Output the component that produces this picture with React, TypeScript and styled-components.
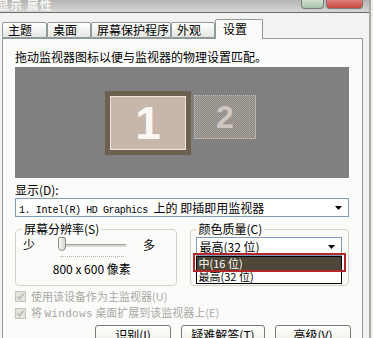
import React from "react";
import styled, { createGlobalStyle } from "styled-components";

const GlobalStyle = createGlobalStyle`
  html, body {
    margin: 0;
    padding: 0;
    background: #efefed;
  }
  body {
    font-family: "Noto Sans CJK SC", "Liberation Sans", sans-serif;
    font-size: 12px;
    color: #000;
  }
`;

const Window = styled.div`
  width: 369px;
  height: 338px;
  overflow: hidden;
  background: #f2f2f0;
  border-right: 2px solid #a9a9a6;
  display: flex;
  flex-direction: column;
`;

const TitleBar = styled.div`
  height: 12px;
  flex: none;
  background: linear-gradient(#b4b4b2, #d6d6d4);
  border-bottom: 1px solid #6e6e6c;
  display: flex;
  align-items: flex-start;
  justify-content: space-between;
  overflow: hidden;
`;

const TitleText = styled.span`
  color: #f4f4f4;
  font-weight: bold;
  font-size: 12px;
  line-height: 10px;
  margin-left: -3px;
  letter-spacing: 1px;
`;

const Controls = styled.div`
  display: flex;
  margin-right: 6px;
  gap: 2px;
`;

interface CtlProps {
  $w: number;
  $bg: string;
}

const Ctl = styled.div<CtlProps>`
  width: ${({ $w }) => $w}px;
  height: 8px;
  background: ${({ $bg }) => $bg};
  border: 1px solid #7a7a78;
  border-top: none;
  border-radius: 0 0 4px 4px;
`;

const Body = styled.div`
  padding: 7px 0 0 2px;
  display: flex;
  flex-direction: column;
`;

const TabRow = styled.div`
  display: flex;
  align-items: flex-end;
  height: 18px;
  position: relative;
  z-index: 1;
`;

interface TabProps {
  $w: number;
  $active?: boolean;
}

const Tab = styled.div<TabProps>`
  width: ${({ $w }) => $w}px;
  box-sizing: border-box;
  height: ${({ $active }) => ($active ? 20 : 16)}px;
  margin-bottom: ${({ $active }) => ($active ? -1 : 0)}px;
  border: 1px solid #8f9a9b;
  border-bottom: ${({ $active }) => ($active ? "none" : "1px solid #8f9a9b")};
  border-radius: 2px 2px 0 0;
  background: ${({ $active }) =>
    $active ? "#fbfbfa" : "linear-gradient(#ffffff, #e6e6e2)"};
  padding-left: ${({ $active }) => ($active ? 7 : 5)}px;
  line-height: ${({ $active }) => ($active ? 18 : 14)}px;
  font-size: 12px;
  white-space: nowrap;
  overflow: hidden;
`;

const Panel = styled.div`
  width: 361px;
  box-sizing: border-box;
  height: 320px;
  border: 1px solid #8f9a9b;
  background: #fbfbfa;
  padding: 11px 13px 0 12px;
  display: flex;
  flex-direction: column;
`;

const Line = styled.div`
  line-height: 14px;
  height: 14px;
  white-space: nowrap;
`;

const MonitorArea = styled.div`
  margin-top: 3px;
  height: 111px;
  background: #808080;
  display: flex;
  justify-content: center;
  align-items: flex-start;
  padding-top: 24px;
  box-sizing: border-box;
  gap: 3px;
  padding-right: 3px;
`;

const MonitorOne = styled.div`
  width: 86px;
  height: 64px;
  box-sizing: border-box;
  border: 5px solid #6c6050;
  background: #c7b6ab;
  box-shadow: inset 0 0 0 1px #efe6dc;
  display: flex;
  align-items: center;
  justify-content: center;
  color: #fbf8f4;
  font-family: "Liberation Sans", Arial, sans-serif;
  font-weight: bold;
  font-size: 46px;
`;

const MonitorTwo = styled.div`
  margin-top: 4px;
  width: 62px;
  height: 44px;
  box-sizing: border-box;
  border: 1px dotted #c8c4c0;
  background: repeating-conic-gradient(#a9a29c 0% 25%, #8c8884 0% 50%) 0 0 / 2px 2px;
  display: flex;
  align-items: center;
  justify-content: center;
  color: #cfc8c2;
  font-family: "Liberation Sans", Arial, sans-serif;
  font-weight: bold;
  font-size: 32px;
`;

const Label = styled(Line)`
  margin-top: 5px;
`;

interface SelectProps {
  $w?: number;
}

const Select = styled.div<SelectProps>`
  margin-top: 1px;
  width: ${({ $w }) => ($w ? `${$w}px` : "auto")};
  height: 19px;
  box-sizing: border-box;
  border: 1px solid #7f9db9;
  background: #fff;
  display: flex;
  align-items: center;
  justify-content: space-between;
  padding: 0 6px 0 3px;
  white-space: nowrap;
`;

interface MonoProps {
  $size?: number;
  $spacing?: number;
}

const Mono = styled.span<MonoProps>`
  font-family: "Liberation Mono", monospace;
  font-size: ${({ $size }) => $size ?? 10}px;
  letter-spacing: ${({ $spacing }) => $spacing ?? -0.4}px;
`;

const Arrow = () => (
  <svg width="7" height="4" viewBox="0 0 7 4">
    <path d="M0 0H7L3.5 4Z" fill="#000" />
  </svg>
);

const Groups = styled.div`
  margin-top: 5px;
  display: flex;
  gap: 13px;
`;

interface GroupProps {
  $w: number;
}

const Group = styled.fieldset<GroupProps>`
  margin: 0;
  width: ${({ $w }) => $w}px;
  height: 64px;
  box-sizing: border-box;
  border: 1px solid #d6d3c6;
  border-radius: 4px;
  padding: 0 5px;
`;

const Legend = styled.legend`
  padding: 0 2px;
  margin-left: 1px;
  line-height: 14px;
  font-size: 12px;
`;

const SliderRow = styled.div`
  display: flex;
  align-items: flex-start;
  height: 18px;
  padding-left: 2px;
`;

const SliderTrack = styled.div`
  width: 68px;
  margin: 0 17px 0 23px;
  height: 18px;
  position: relative;
  &::before {
    content: "";
    position: absolute;
    left: 0;
    right: 0;
    top: 8px;
    height: 2px;
    background: #d8d8d0;
    border-top: 1px solid #a0a09a;
  }
  &::after {
    content: "";
    position: absolute;
    left: 2px;
    right: 2px;
    top: 20px;
    border-top: 1px dotted #b8b8b0;
  }
`;

const Thumb = styled.div`
  position: absolute;
  left: 0;
  top: 1px;
  width: 8px;
  height: 14px;
  box-sizing: border-box;
  border: 1px solid #8f8f88;
  border-radius: 2px 2px 4px 4px;
  background: linear-gradient(90deg, #f8f8f4, #d8d8d0);
`;

const Resolution = styled.div`
  margin-top: 8px;
  text-align: center;
  line-height: 14px;
  padding-right: 8px;
`;

const SelectWrap = styled.div`
  position: relative;
  width: 146px;
`;

const DropList = styled.div`
  position: absolute;
  left: 0;
  top: 19px;
  width: 146px;
  box-sizing: border-box;
  border: 1px solid #000;
  background: #fff;
  padding: 0;
  z-index: 2;
`;

interface ItemProps {
  $selected?: boolean;
}

const Item = styled.div<ItemProps>`
  height: 13px;
  line-height: 13px;
  padding-left: 2px;
  font-size: 11px;
  background: ${({ $selected }) => ($selected ? "#4e4636" : "transparent")};
  color: ${({ $selected }) => ($selected ? "#fff" : "#000")};
  white-space: nowrap;
`;

const Highlight = styled.div`
  position: absolute;
  left: -3px;
  top: 16px;
  width: 153px;
  height: 19px;
  box-sizing: border-box;
  border: 2px solid #b3262a;
  pointer-events: none;
  z-index: 3;
`;

const CheckRow = styled.div`
  margin-top: 4px;
  display: flex;
  align-items: center;
  gap: 5px;
  height: 13px;
  color: #a8a8a4;
  white-space: nowrap;
  font-size: 11px;
  line-height: 13px;
`;

const CheckBox = () => (
  <svg width="11" height="11" viewBox="0 0 11 11">
    <rect x="0.5" y="0.5" width="10" height="10" fill="#e4e4dc" stroke="#c4c4bc" />
    <path d="M2.5 5.5L4.5 7.5L8.5 3" fill="none" stroke="#b8b8b0" strokeWidth="1.6" />
  </svg>
);

const ButtonRow = styled.div`
  margin-top: 5px;
  margin-right: -2px;
  display: flex;
  justify-content: flex-end;
  gap: 10px;
`;

interface ButtonProps {
  $w: number;
}

const Button = styled.div<ButtonProps>`
  width: ${({ $w }) => $w}px;
  height: 23px;
  box-sizing: border-box;
  border: 1px solid #7a7a74;
  border-radius: 3px;
  background: linear-gradient(#ffffff, #ececE6 85%, #d6d0c5);
  text-align: center;
  line-height: 17px;
  font-size: 12px;
`;

const tabs = [
  { label: "主题", w: 45 },
  { label: "桌面", w: 44 },
  { label: "屏幕保护程序", w: 80 },
  { label: "外观", w: 44 },
];

export default function App() {
  return (
    <>
      <GlobalStyle />
      <Window>
        <TitleBar>
          <TitleText>显示 属性</TitleText>
          <Controls>
            <Ctl $w={21} $bg="linear-gradient(#cfe0d0, #a8c4ac)" />
            <Ctl $w={35} $bg="linear-gradient(#e08078, #c84840)" />
          </Controls>
        </TitleBar>
        <Body>
          <TabRow>
            {tabs.map((t) => (
              <Tab key={t.label} $w={t.w}>
                {t.label}
              </Tab>
            ))}
            <Tab $w={48} $active>
              设置
            </Tab>
          </TabRow>
          <Panel>
            <Line>拖动监视器图标以便与监视器的物理设置匹配。</Line>
            <MonitorArea>
              <MonitorOne>1</MonitorOne>
              <MonitorTwo>2</MonitorTwo>
            </MonitorArea>
            <Label>显示(D):</Label>
            <Select>
              <span>
                <Mono>1. Intel(R) HD Graphics </Mono>上的 即插即用监视器
              </span>
              <Arrow />
            </Select>
            <Groups>
              <Group $w={162}>
                <Legend>屏幕分辨率(S)</Legend>
                <SliderRow>
                  <span>少</span>
                  <SliderTrack>
                    <Thumb />
                  </SliderTrack>
                  <span>多</span>
                </SliderRow>
                <Resolution>800 x 600 像素</Resolution>
              </Group>
              <Group $w={160}>
                <Legend>颜色质量(C)</Legend>
                <SelectWrap>
                  <Select $w={146}>
                    <span>最高(32 位)</span>
                    <Arrow />
                  </Select>
                  <DropList>
                    <Item $selected>中(16 位)</Item>
                    <Item>最高(32 位)</Item>
                  </DropList>
                  <Highlight />
                </SelectWrap>
              </Group>
            </Groups>
            <CheckRow>
              <CheckBox />
              使用该设备作为主监视器(U)
            </CheckRow>
            <CheckRow>
              <CheckBox />
              <span>
                将 <Mono $size={11} $spacing={0.3}>Windows</Mono> 桌面扩展到该监视器上(E)
              </span>
            </CheckRow>
            <ButtonRow>
              <Button $w={76}>识别(I)</Button>
              <Button $w={84}>疑难解答(T)</Button>
              <Button $w={76}>高级(V)</Button>
            </ButtonRow>
          </Panel>
        </Body>
      </Window>
    </>
  );
}
